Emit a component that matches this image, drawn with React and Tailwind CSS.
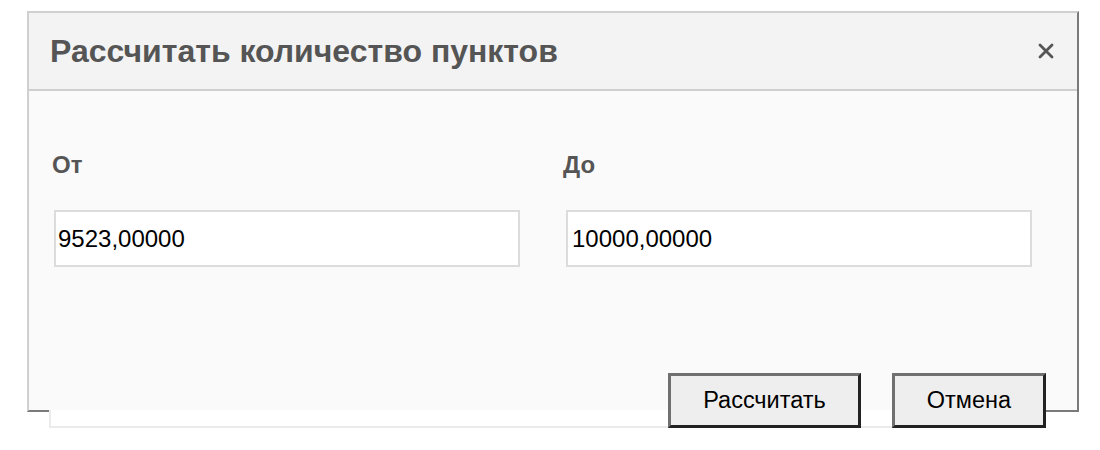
import React from "react";

export default function App() {
  return (
    <div
      className="w-[1100px] h-[450px] bg-white pt-[11px] pl-[27px]"
      style={{ fontFamily: '"Liberation Sans", Arial, sans-serif' }}
    >
      <div className="w-[1052px] h-[401px] flex flex-col bg-[#fafafa] border-2 border-t-[#d0d0d0] border-l-[#d0d0d0] border-r-[#7a7a7a] border-b-[#7a7a7a]">
        <div className="h-[78px] shrink-0 flex items-center justify-between pl-[21px] pr-[23px] bg-[#f3f3f3] border-b-2 border-[#cfcfcf]">
          <h1 className="text-[32px] leading-[40px] font-bold text-[#555]">Рассчитать количество пунктов</h1>
          <button className="w-[16px] h-[16px] flex items-center justify-center text-[#555]">
            <svg width="16" height="16" viewBox="0 0 16 16">
              <path d="M2 2L14 14M14 2L2 14" stroke="currentColor" strokeWidth="2.8" strokeLinecap="round" />
            </svg>
          </button>
        </div>

        <div className="pt-[60px] pl-[25px] grid grid-cols-[466px_466px] gap-x-[46px]">
          <label className="flex flex-col">
            <span className="text-[24px] leading-[28px] font-bold text-[#555] -ml-[2px]">От</span>
            <input
              defaultValue="9523,00000"
              className="mt-[31px] h-[57px] px-[2px] bg-white border-2 border-[#dcdcdc] text-[24px] text-black outline-none"
            />
          </label>
          <label className="flex flex-col">
            <span className="text-[24px] leading-[28px] font-bold text-[#555] -ml-[3px]">До</span>
            <input
              defaultValue="10000,00000"
              className="mt-[31px] h-[57px] px-[4px] bg-white border-2 border-[#dcdcdc] text-[24px] text-black outline-none"
            />
          </label>
        </div>
      </div>

      <div className="relative z-10 -mt-[2px] ml-[22px] w-[997px] h-[18px] flex justify-end items-end gap-[31px] bg-white border-l-2 border-b-2 border-[#ebebeb]">
        <button className="w-[193px] h-[55px] -mb-[2px] shrink-0 bg-[#eeeeee] border-[3px] border-t-[#707070] border-l-[#707070] border-r-[#222] border-b-[#222] text-[23.5px] text-black">
          Рассчитать
        </button>
        <button className="w-[154px] h-[55px] -mb-[2px] shrink-0 bg-[#eeeeee] border-[3px] border-t-[#707070] border-l-[#707070] border-r-[#222] border-b-[#222] text-[23.5px] text-black">
          Отмена
        </button>
      </div>
    </div>
  );
}
